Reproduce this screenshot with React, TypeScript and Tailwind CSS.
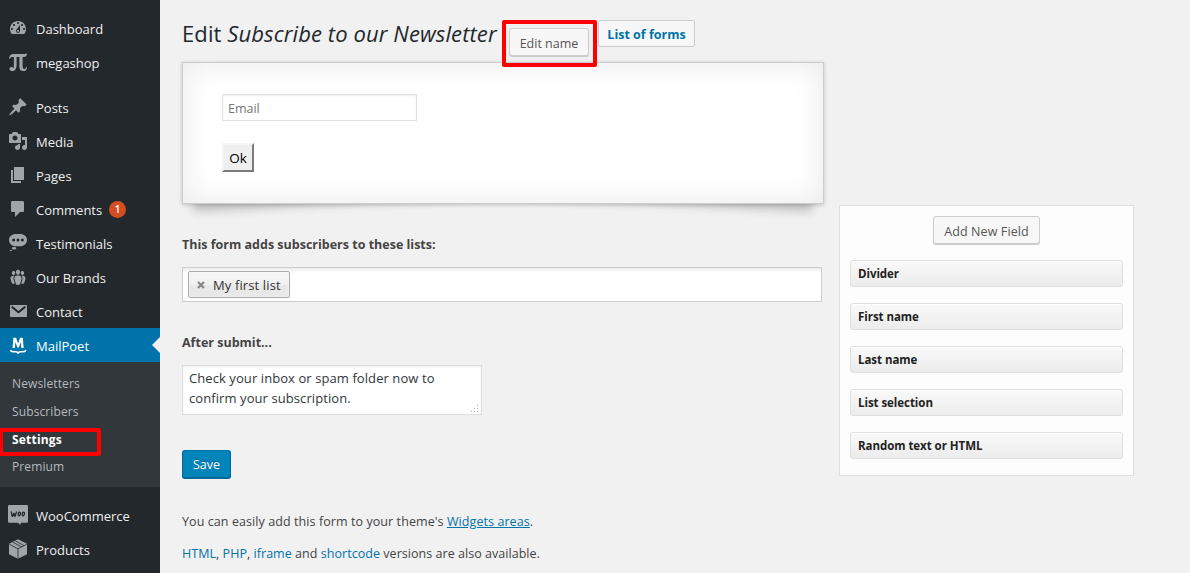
import type { ReactNode } from "react";

type IconProps = { children: ReactNode };

function Icon({ children }: IconProps) {
  return (
    <svg viewBox="0 0 20 20" className="h-5 w-5 shrink-0" fill="currentColor" fillRule="evenodd">
      {children}
    </svg>
  );
}

const icons = {
  dashboard: (
    <Icon>
      <path d="M3.76 16h12.48c1.1-1.37 1.76-3.11 1.76-5 0-4.42-3.58-8-8-8s-8 3.58-8 8c0 1.89.66 3.63 1.76 5zM10 4c.55 0 1 .45 1 1s-.45 1-1 1-1-.45-1-1 .45-1 1-1zM6 6c.55 0 1 .45 1 1s-.45 1-1 1-1-.45-1-1 .45-1 1-1zm8 0c.55 0 1 .45 1 1s-.45 1-1 1-1-.45-1-1 .45-1 1-1zm-5.37 5.55L12 7v6c0 1.1-.9 2-2 2s-2-.9-2-2c0-.57.24-1.08.63-1.45zM4 10c.55 0 1 .45 1 1s-.45 1-1 1-1-.45-1-1 .45-1 1-1zm12 0c.55 0 1 .45 1 1s-.45 1-1 1-1-.45-1-1 .45-1 1-1zm-5 3c0-.55-.45-1-1-1s-1 .45-1 1 .45 1 1 1 1-.45 1-1z" />
    </Icon>
  ),
  pi: (
    <Icon>
      <path d="M1 6.500C1.600 3.200 3 2 5.500 2H16c1.300 0 2.200-.2 2.700-.8L19 1.500C18.800 4 17.800 5 15.800 5H14.600v9.200c0 1.900.7 2.700 1.600 2.700 1.100 0 1.800-.8 1.900-2h.9c-.1 2.800-1.500 4.200-3.600 4.200-2.800 0-4-1.500-4-4.300V5H8.600v7.500c0 4.200-1.600 6.600-4.200 6.600-1.700 0-2.900-.9-2.900-2.300 0-1.200.8-1.900 1.900-1.900.9 0 1.400.5 1.800 1.400.5-.8.7-2.200.7-4.400V5H5C3.300 5 2.500 5.400 1.800 6.700z" />
    </Icon>
  ),
  post: (
    <Icon>
      <path d="M10.440 3.020l1.820-1.820 6.360 6.350-1.830 1.820c-1.050-.68-2.480-.57-3.410.36l-.75.75c-.92.93-1.040 2.350-.35 3.410l-1.830 1.820-2.410-2.410-2.800 2.790c-.42.42-3.380 2.710-3.800 2.290s1.860-3.390 2.280-3.810l2.790-2.790L4.100 9.360l1.830-1.820c1.050.69 2.480.57 3.400-.36l.75-.75c.93-.92 1.050-2.350.36-3.410z" />
    </Icon>
  ),
  media: (
    <Icon>
      <path d="M13 11V4c0-.55-.45-1-1-1h-1.670L9 1H5L3.670 3H2c-.55 0-1 .45-1 1v7c0 .55.45 1 1 1h10c.55 0 1-.45 1-1zM7 4.500c1.380 0 2.500 1.120 2.500 2.500S8.380 9.500 7 9.500 4.500 8.380 4.500 7 5.620 4.500 7 4.500zM14 6h5v10.500c0 1.380-1.120 2.500-2.500 2.500S14 17.880 14 16.500s1.120-2.500 2.500-2.500c.17 0 .34.02.5.05V9h-3V6zm-4 8.050V13h2v3.500c0 1.380-1.120 2.500-2.500 2.500S7 17.880 7 16.500 8.120 14 9.500 14c.17 0 .34.02.5.05z" />
    </Icon>
  ),
  page: (
    <Icon>
      <path d="M6 15V2h10v13H6zm-1 1h8v2H3V5h2v11z" />
    </Icon>
  ),
  comment: (
    <Icon>
      <path d="M4.500 2h10c1 0 1.500.6 1.500 1.500v8c0 1-.5 1.500-1.500 1.500H12l-5 5v-5H4.500C3.500 13 3 12.500 3 11.500v-8C3 2.600 3.500 2 4.500 2z" />
    </Icon>
  ),
  testimonial: (
    <Icon>
      <path d="M8 1h4c4 0 7 2.500 7 6s-3 6.300-7 6.300H8c-4 0-7-2.800-7-6.300s3-6 7-6zM5.600 5.600a1.500 1.500 0 100 3 1.500 1.500 0 000-3zm4.400 0a1.500 1.500 0 100 3 1.500 1.500 0 000-3zm4.400 0a1.500 1.500 0 100 3 1.500 1.500 0 000-3z" />
      <ellipse cx="6" cy="15.300" rx="2.300" ry="1.200" />
      <ellipse cx="2.900" cy="17.600" rx="1.200" ry=".7" />
    </Icon>
  ),
  groups: (
    <Icon>
      <path d="M8.030 4.460c-.29 1.280.55 3.460 1.970 3.460 1.410 0 2.250-2.180 1.960-3.460-.22-.98-1.080-1.630-1.960-1.630-.89 0-1.740.65-1.960 1.630zm-4.130.9c-.25 1.080.47 2.930 1.670 2.930s1.920-1.850 1.670-2.930c-.19-.83-.92-1.390-1.670-1.390s-1.480.56-1.670 1.390zm8.860 0c-.25 1.080.47 2.930 1.660 2.930 1.200 0 1.920-1.850 1.670-2.930-.19-.83-.92-1.390-1.670-1.390-.74 0-1.470.56-1.660 1.390zm-.59 11.430l1.250-4.300C14.200 10 12.710 8.470 10 8.470c-2.720 0-4.210 1.530-3.440 4.020l1.260 4.300C8.050 17.510 9 18 10 18c.98 0 1.940-.49 2.170-1.210zm-6.100-7.630c-.49.67-.96 1.830-.42 3.590l1.120 3.790c-.34.2-.77.31-1.200.31-.85 0-1.650-.41-1.850-1.030l-1.070-3.650c-.65-2.110.61-3.400 2.920-3.400.27 0 .54.02.79.06-.1.1-.2.22-.29.33zm8.350-.39c2.310 0 3.580 1.290 2.920 3.400l-1.070 3.650c-.2.62-1 1.030-1.850 1.030-.43 0-.86-.11-1.200-.31l1.110-3.770c.55-1.780.08-2.940-.42-3.610-.08-.11-.18-.23-.28-.33.25-.04.51-.06.79-.06z" />
    </Icon>
  ),
  email: (
    <Icon>
      <path d="M3 4h15c.7 0 1 .3 1 1v10c0 .7-.3 1-1 1H3c-.7 0-1-.3-1-1V5c0-.7.3-1 1-1zm.6 1.400c-.6.500-.4 1.100 0 1.500l6.900 5.700 6.900-5.700c.4-.4.6-1 0-1.500-.5-.4-1-.2-1.500.2l-5.400 4.300-5.400-4.300c-.5-.4-1-.6-1.500-.2z" />
    </Icon>
  ),
  mailpoet: (
    <Icon>
      <path d="M4.500 13L5.400 2.800h2.700l2 5.700 2-5.700h2.700l.9 10.200h-2.400l-.5-6-1.900 5.500H9.300L7.400 7l-.5 6z" />
      <path d="M2.700 15.600c.5 1 1.400 1.200 3 1.200h2c1.200 0 1.800.4 2.400 1.100.6-.7 1.200-1.100 2.400-1.100h2c1.600 0 2.600-.2 3.100-1.200" fill="none" stroke="currentColor" strokeWidth="1.600" strokeLinecap="round" />
    </Icon>
  ),
  woo: (
    <Icon>
      <path d="M1.500 0h17c1 0 1.500.5 1.500 1.500v14.800c0 1-.5 1.500-1.500 1.500h-5.500l-.8 2.200-2.200-2.200H1.500c-1 0-1.500-.5-1.500-1.500V1.500C0 .5.500 0 1.500 0z" />
      <g fill="none" stroke="#23282d" strokeWidth="1.300" strokeLinecap="round" strokeLinejoin="round">
        <path d="M3.300 7l1 4.500 1.700-3.200.9 3.200L8.500 7" />
        <ellipse cx="11.300" cy="9" rx="1.100" ry="1.800" transform="rotate(12 11.300 9)" />
        <ellipse cx="15.300" cy="9" rx="1.100" ry="1.800" transform="rotate(12 15.300 9)" />
      </g>
    </Icon>
  ),
  product: (
    <Icon>
      <path d="M10 .3l9 4.500v10.400l-9 4.500-9-4.500V4.800z" />
      <path d="M1.300 5.200l8.700 4.600L18.700 5.200M10 9.800v9.700M4.800 3.200l8.700 4.700M7.300 1.800l8.500 4.700" fill="none" stroke="#23282d" strokeWidth=".8" />
    </Icon>
  ),
};

type MenuEntry = { label: string; icon: ReactNode; badge?: string };

const topMenu: MenuEntry[] = [
  { label: "Dashboard", icon: icons.dashboard },
  { label: "megashop", icon: icons.pi },
];

const contentMenu: MenuEntry[] = [
  { label: "Posts", icon: icons.post },
  { label: "Media", icon: icons.media },
  { label: "Pages", icon: icons.page },
  { label: "Comments", icon: icons.comment, badge: "1" },
  { label: "Testimonials", icon: icons.testimonial },
  { label: "Our Brands", icon: icons.groups },
  { label: "Contact", icon: icons.email },
];

const shopMenu: MenuEntry[] = [
  { label: "WooCommerce", icon: icons.woo },
  { label: "Products", icon: icons.product },
];

function MenuItem({ label, icon, badge }: MenuEntry) {
  return (
    <li className="flex h-[34px] items-center pl-2 text-[#a0a5aa]">
      {icon}
      <span className="ml-2 pt-0.5 text-[13px] leading-[18px] text-[#eee]">{label}</span>
      {badge && (
        <span className="ml-[7px] flex h-[17px] w-[17px] items-center justify-center rounded-full bg-[#d54e21] pt-px text-[10px] font-semibold text-white">
          {badge}
        </span>
      )}
    </li>
  );
}

const submenu = ["Newsletters", "Subscribers", "Settings", "Premium"];

function Sidebar() {
  return (
    <nav className="h-[573px] w-40 shrink-0 overflow-hidden bg-[#23282d] pt-[11px]">
      <ul>{topMenu.map((m) => <MenuItem key={m.label} {...m} />)}</ul>
      <ul className="mt-[11px]">{contentMenu.map((m) => <MenuItem key={m.label} {...m} />)}</ul>
      <div className="relative flex h-[34px] items-center bg-[#0073aa] pl-2 text-white">
        {icons.mailpoet}
        <span className="ml-2 pt-0.5 text-[13px] leading-[18px]">MailPoet</span>
        <span className="absolute top-[9px] right-0 border-y-8 border-r-8 border-y-transparent border-r-[#f1f1f1]" />
      </div>
      <ul className="h-[125px] bg-[#32373c] pt-2">
        {submenu.map((s) =>
          s === "Settings" ? (
            <li key={s} className="relative h-[27.75px] pl-3 text-[12px] leading-[28px] font-bold tracking-[0.2px] text-white">
              {s}
              <span className="absolute top-[2.500px] left-[-1px] h-[28px] w-[102px] rounded-[2px] border-4 border-[#fe0000]" />
            </li>
          ) : (
            <li key={s} className="h-[27.75px] pl-3 text-[12px] leading-[28px] tracking-[0.12px] text-[#b4b9be]">
              {s}
            </li>
          ),
        )}
      </ul>
      <ul className="mt-[11px]">{shopMenu.map((m) => <MenuItem key={m.label} {...m} />)}</ul>
    </nav>
  );
}

function Heading() {
  return (
    <header className="flex h-[62px] items-start">
      <h1 className="w-[320px] pt-[17px] text-[22px] leading-[32px] tracking-[0.1px] whitespace-nowrap text-[#23282d]">
        Edit <em>Subscribe to our Newsletter</em>
      </h1>
      <div className="relative z-10 mt-5 flex h-[47px] w-[95px] items-start rounded-[2px] border-4 border-[#fe0000] pt-[4px] pl-[3px]">
        <button className="h-[28px] w-[80px] rounded-[3px] border border-[#ccc] bg-[#f7f7f7] pt-[4px] text-[12.500px] text-[#555] shadow-[0_1px_0_#ccc]">
          Edit name
        </button>
      </div>
      <a className="mt-5 ml-px flex h-[27px] w-[97px] items-center justify-center rounded-[2px] border border-[#ccc] bg-[#f7f7f7] pt-[3px] text-[12.500px] font-bold whitespace-nowrap text-[#0073aa]">
        List of forms
      </a>
    </header>
  );
}

function Preview() {
  return (
    <section className="relative z-0 h-[142px] w-[642px]">
      <span className="absolute bottom-[15px] left-[10px] -z-10 h-[20%] w-[300px] -rotate-3 shadow-[0_15px_10px_rgba(0,0,0,0.2)]" />
      <span className="absolute right-[10px] bottom-[15px] -z-10 h-[20%] w-[300px] rotate-3 shadow-[0_15px_10px_rgba(0,0,0,0.2)]" />
      <div className="h-full border border-[#ccc] bg-white pt-[31px] pl-[39px] shadow-[0_1px_4px_rgba(0,0,0,0.2),inset_0_0_30px_rgba(0,0,0,0.09)]">
        <div className="h-[27px] w-[195px] border border-[#e2e2e2] bg-white pt-px pl-[5px] text-[12.500px] leading-[25px] text-[#757575] shadow-[inset_0_1px_2px_rgba(0,0,0,0.07)]">
          Email
        </div>
        <button className="mt-[22px] h-[29px] w-[32px] border-2 border-t-[#f5f5f5] border-r-[#7b7b7b] border-b-[#7b7b7b] border-l-[#f5f5f5] bg-[#efefef] pt-px text-[13.500px] leading-[24px] text-black">
          Ok
        </button>
      </div>
    </section>
  );
}

function Lists() {
  return (
    <section>
      <h2 className="pt-[31px] text-[12.500px] leading-[20px] font-bold text-[#444]">This form adds subscribers to these lists:</h2>
      <div className="mt-[12px] h-[35px] w-[640px] border border-[#ccc] bg-white bg-linear-to-b from-[#eee] from-[1%] to-white to-[15%] pt-[3px] pl-[5px]">
        <div className="flex h-[27px] w-[102px] items-center rounded-[2px] border border-[#aaa] bg-linear-to-b from-[#f4f4f4] from-20% via-[#f0f0f0] via-50% to-[#e8e8e8] to-52% pl-[8px] shadow-[0_0_2px_white_inset]">
          <svg viewBox="0 0 8 8" className="h-2 w-2 shrink-0">
            <path d="M1 1l6 6M7 1L1 7" stroke="#888" strokeWidth="2.200" />
          </svg>
          <span className="ml-2 pt-[2px] text-[13px] tracking-[0.12px] whitespace-nowrap text-[#333]">My first list</span>
        </div>
      </div>
    </section>
  );
}

function AfterSubmit() {
  return (
    <section>
      <h2 className="pt-[31px] text-[12.500px] leading-[20px] font-bold text-[#444]">After submit...</h2>
      <div className="relative mt-[12px] h-[50px] w-[300px] border border-[#ddd] bg-white pt-[2px] pl-[6px] text-[13px] leading-[20px] tracking-[0.08px] whitespace-nowrap text-[#32373c] shadow-[inset_0_1px_2px_rgba(0,0,0,0.07)]">
        Check your inbox or spam folder now to
        <br />
        confirm your subscription.
        <svg viewBox="0 0 9 9" className="absolute right-[2px] bottom-px h-[9px] w-[9px]" fill="#aaa" shapeRendering="crispEdges">
          <path d="M7 1h1v1h-1zM7 4h1v1h-1zM4 4h1v1h-1zM7 7h1v1h-1zM4 7h1v1h-1zM1 7h1v1h-1z" />
        </svg>
      </div>
      <button className="mt-[35px] block h-[28px] w-[49px] rounded-[3px] border border-[#006799] border-t-[#0073aa] bg-[#0085ba] pt-[3px] text-[12.500px] text-white shadow-[0_1px_0_#006799] text-shadow-[0_-1px_1px_#006799]">
        Save
      </button>
    </section>
  );
}

function Footnotes() {
  return (
    <footer className="pt-[34px] text-[12.500px] leading-[20px] text-[#444]">
      <p className="tracking-[0.08px]">
        You can easily add this form to your theme's <a className="text-[#0073aa] underline">Widgets areas</a>.
      </p>
      <p className="mt-[12px] tracking-[0.04px]">
        <a className="text-[#0073aa]">HTML</a>, <a className="text-[#0073aa]">PHP</a>, <a className="text-[#0073aa]">iframe</a> and{" "}
        <a className="text-[#0073aa]">shortcode</a> versions are also available.
      </p>
    </footer>
  );
}

const fields = ["Divider", "First name", "Last name", "List selection", "Random text or HTML"];

function FieldPanel() {
  return (
    <aside className="mt-[205px] ml-[15px] h-[271px] w-[295px] border border-[#dfdfdf] bg-[#fdfdfd] px-[10px] pt-[10px]">
      <button className="mx-auto block h-[28px] w-[107px] rounded-[3px] border border-[#ccc] bg-[#f7f7f7] pt-[4px] text-[12.500px] tracking-[0.1px] text-[#555] shadow-[0_1px_0_#ccc]">
        Add New Field
      </button>
      <ul className="mt-[16px] flex flex-col gap-4">
        {fields.map((f) => (
          <li
            key={f}
            className="h-[27px] rounded-[3px] border border-[#dfdfdf] bg-linear-to-b from-[#f9f9f9] to-[#ececec] pl-[7px] text-[11.500px] leading-[25px] font-bold tracking-[-0.05px] text-[#222] shadow-[inset_0_1px_0_#fff]"
          >
            {f}
          </li>
        ))}
      </ul>
    </aside>
  );
}

export default function App() {
  return (
    <div className="flex h-[573px] w-[1190px] overflow-hidden bg-[#f1f1f1] font-['Open_Sans','Noto_Sans',sans-serif]">
      <Sidebar />
      <main className="flex items-start pl-[22px]">
        <div className="w-[642px]">
          <Heading />
          <Preview />
          <Lists />
          <AfterSubmit />
          <Footnotes />
        </div>
        <FieldPanel />
      </main>
    </div>
  );
}
